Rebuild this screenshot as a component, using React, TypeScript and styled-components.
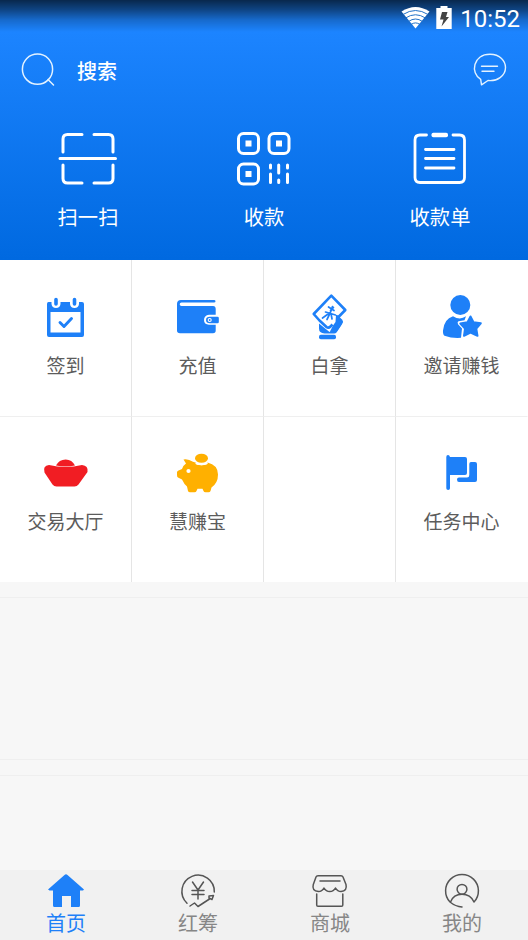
import React from "react";
import styled, { createGlobalStyle } from "styled-components";

const BLUE = "#1e80f8";

const GlobalStyle = createGlobalStyle`
  * { box-sizing: border-box; }
  body {
    margin: 0;
    background: #f7f7f7;
    font-family: "Noto Sans CJK SC", sans-serif;
  }
`;

const Screen = styled.div`
  width: 528px;
  height: 940px;
  display: flex;
  flex-direction: column;
  overflow: hidden;
  background: #f7f7f7;
`;

const Header = styled.header`
  height: 260px;
  flex: none;
  color: #fff;
  background:
    linear-gradient(180deg, rgba(0, 0, 0, 0.7) 0, rgba(0, 0, 0, 0.48) 10px, rgba(0, 0, 0, 0.2) 20px, rgba(0, 0, 0, 0) 32px),
    linear-gradient(180deg, #1c84ff 0, #1c84ff 32px, #0069e0 260px);
`;

const StatusBar = styled.div`
  height: 38px;
  display: flex;
  justify-content: flex-end;
  padding-right: 8px;
`;

const Clock = styled.time`
  font: 400 24px/38px Roboto, sans-serif;
  margin-left: 7px;
`;

const SearchBar = styled.div`
  height: 64px;
  display: flex;
  align-items: center;
  padding: 0 20px;
`;

const SearchText = styled.span`
  flex: 1;
  margin-left: 21px;
  padding-top: 2px;
  font-size: 20px;
  font-weight: 500;
  line-height: 30px;
`;

const Actions = styled.div`
  display: grid;
  grid-template-columns: repeat(3, 176px);
  padding-top: 25px;
`;

const Action = styled.div`
  display: flex;
  flex-direction: column;
  align-items: center;
  font-size: 20.3px;
  font-weight: 400;
  line-height: 30px;
  gap: 10px;
`;

const Services = styled.main`
  flex: none;
  display: grid;
  grid-template-columns: repeat(4, 132px);
  grid-template-rows: 156px 166px;
  background: #fff;
`;

const Service = styled.div<{ $lastColumn: boolean; $secondRow: boolean }>`
  display: flex;
  flex-direction: column;
  align-items: center;
  padding-top: ${(p) => (p.$secondRow ? 29 : 30)}px;
  border-right: 1px solid ${(p) => (p.$lastColumn ? "transparent" : "#e5e5e5")};
  border-top: ${(p) => (p.$secondRow ? "1px solid #efefef" : "0")};
  color: #5c5c5c;
  font-size: 19px;
  line-height: 28px;
  gap: 6px;
`;

const Divider = styled.div<{ $gap: number }>`
  flex: none;
  height: 1px;
  margin-top: ${(p) => p.$gap}px;
  background: #efefef;
`;

const TabBar = styled.nav`
  height: 70px;
  flex: none;
  margin-top: auto;
  display: grid;
  grid-template-columns: repeat(4, 132px);
  background: #f1f1f1;
`;

const Tab = styled.div<{ $active: boolean }>`
  display: flex;
  flex-direction: column;
  align-items: center;
  padding-top: 2px;
  color: ${(p) => (p.$active ? BLUE : "#868686")};
  font-size: 20px;
  line-height: 29px;
`;

const Glyph = styled.svg`
  display: block;
  flex: none;
  overflow: visible;
`;

const Stroked = styled.g<{ $width: number; $color?: string }>`
  fill: none;
  stroke: ${(p) => p.$color || "#fff"};
  stroke-width: ${(p) => p.$width};
  stroke-linecap: round;
  stroke-linejoin: round;
`;

type IconProps = { x: number; y: number; w: number; h: number; children?: React.ReactNode };

const Icon = ({ x, y, w, h, children }: IconProps) => (
  <Glyph width={w} height={h} viewBox={`${x} ${y} ${w} ${h}`}>
    {children}
  </Glyph>
);

const actions = [
  {
    label: "扫一扫",
    icon: (
      <Icon x={56} y={127} w={64} h={64}>
        <Stroked $width={3}>
          <path d="M63 152V139Q63 134.500 67.500 134.500H82M94 134.500H108.500Q113 134.500 113 139V152M63 165V178.500Q63 183 67.500 183H82M94 183H108.500Q113 183 113 178.500V165M60 158.500H115.500" />
        </Stroked>
      </Icon>
    ),
  },
  {
    label: "收款",
    icon: (
      <Icon x={232} y={127} w={64} h={64}>
        <Stroked $width={3}>
          <rect x="238.500" y="133.500" width="20" height="20" rx="5" />
          <rect x="269" y="133.500" width="20" height="20" rx="5" />
          <rect x="238.500" y="164" width="20" height="20" rx="5" />
          <path d="M270.500 165V168M270.500 174V182.500M278.700 165V173M278.700 180V182.500M287.500 165V168M287.500 174V182.500" />
        </Stroked>
        <path fill="#fff" d="M245.500 140.500h6v6h-6zM276 140.500h6v6h-6zM245.500 171h6v6h-6z" />
      </Icon>
    ),
  },
  {
    label: "收款单",
    icon: (
      <Icon x={408} y={127} w={64} h={64}>
        <Stroked $width={2.8}>
          <path d="M426.500 135H420Q415 135 415 140V177.500Q415 182.500 420 182.500H459.500Q464.500 182.500 464.500 177.500V140Q464.500 135 459.500 135H453M425.500 149.500H454M425.500 158.500H454M425.500 168H454" />
        </Stroked>
        <rect x="431.500" y="132.700" width="16.500" height="4.600" rx="1.800" fill="#fff" />
      </Icon>
    ),
  },
];

const services = [
  {
    label: "签到",
    icon: (
      <Icon x={38} y={290} w={55} h={55}>
        <path
          fill={BLUE}
          fillRule="evenodd"
          d="M48.500 302H51.500V304Q52 308 56 308Q60 308 60.500 304V302H70V304Q70.500 308 74.500 308Q78.500 308 79 304V302H82Q84 302 84 304V335Q84 337 82 337H49Q47 337 47 335V304Q47 302 48.500 302ZM50.500 312V332.500H80.500V312Z"
        />
        <Stroked $width={3.6} $color={BLUE}>
          <path d="M56 299.500V304M74.500 299.500V304" />
        </Stroked>
        <Stroked $width={2.9} $color={BLUE}>
          <path d="M60 322.500L64 326.500L71.500 318.500" />
        </Stroked>
      </Icon>
    ),
  },
  {
    label: "充值",
    icon: (
      <Icon x={170} y={290} w={55} h={55}>
        <path
          fill={BLUE}
          d="M181 300H214Q215.500 300 215.500 301.300Q215.500 302.500 214 302.500H181.500Q179.700 302.700 179.700 304.200Q179.700 306 181.500 306H213Q215.700 306 215.700 309V314.800H209Q204 315.500 204 320Q204 324.500 209 324.700H215.700V330.500Q215.700 333.300 213 333.300H180Q177 333.300 177 330.500V304Q177 300 181 300Z"
        />
        <path fill={BLUE} d="M210 316.700H217.500Q218.800 316.700 218.800 318V322Q218.800 323.300 217.500 323.300H210Q206 323.300 206 320Q206 316.700 210 316.700Z" />
        <circle cx="209.700" cy="320" r="1.500" fill={BLUE} stroke="#fff" strokeWidth="1.100" />
      </Icon>
    ),
  },
  {
    label: "白拿",
    icon: (
      <Icon x={302} y={290} w={55} h={55}>
        <path fill={BLUE} d="M319 323.500L329.500 332L338 324L343 320.500Q343.500 322 341.500 325L336.500 332.500Q335.500 333.800 333.500 333.500H324.500Q319 333 319 328.500Z" />
        <rect x="319" y="334.800" width="17" height="4.400" rx="1.800" fill={BLUE} />
        <path d="M331.300 296L345.300 310L328.800 327.500L313.700 314Z" fill="#fff" stroke="#fff" strokeWidth="4.600" strokeLinejoin="round" />
        <path d="M337 318.500L345.300 310L331.300 295.700L313.700 314L319.500 320.500L326.500 327Q328.500 328.500 330.500 326.500L332.500 324.500" fill="none" stroke={BLUE} strokeWidth="2.600" strokeLinejoin="round" />
        <path d="M336 315Q338.500 314.500 339.500 317L342.500 320Q343 323 340.500 326L336.500 332L330 331.500L333 325.500L335.500 322Z" fill={BLUE} />
        <Stroked $width={1.7} $color={BLUE}>
          <path d="M328.500 307L334 310.500M325.500 312L335.500 315M332.500 306.500Q331 312 327 319.500M329.500 313L322.500 318M331 313.500L332 319" />
          <path d="M333.500 307.500L330.500 310.500" />
        </Stroked>
      </Icon>
    ),
  },
  {
    label: "邀请赚钱",
    icon: (
      <Icon x={434} y={290} w={55} h={55}>
        <circle cx="460.300" cy="305" r="10" fill={BLUE} />
        <path fill={BLUE} d="M453 316.200Q460 320.500 466 316.300L464.500 320.300L458.500 321.300Q457 322 458 324.300L462 328.500L461 337.800Q452 338.500 444.500 335.700Q442.700 334.500 443 330.500Q444 319 453 316.200Z" />
        <path
          fill={BLUE}
          stroke={BLUE}
          strokeWidth="2"
          strokeLinejoin="round"
          d="M470.500 316.500L473.500 322.200L480.800 323.300L476.300 328.600L477.500 335.800L470.500 332.700L464 335.800L465 328.600L460.300 323.500L467.500 322.200Z"
        />
      </Icon>
    ),
  },
  {
    label: "交易大厅",
    icon: (
      <Icon x={38} y={446} w={55} h={55}>
        <path fill="#f11d23" d="M56 465.500Q59 459.500 65.700 459.500Q72 459.500 75 465.500Q65.500 467.500 56 465.500Z" />
        <path
          fill="#f11d23"
          d="M49 465Q65.500 469.200 82 465Q88.500 465.500 87.500 472L78.500 484.500Q77 486.400 74.500 486.400H56.500Q54 486.400 52.500 484.500L44.500 472.500Q42.500 465.500 49 465Z"
        />
      </Icon>
    ),
  },
  {
    label: "慧赚宝",
    icon: (
      <Icon x={170} y={446} w={55} h={55}>
        <ellipse cx="201.500" cy="458.200" rx="6.500" ry="4.500" fill="#ffb000" />
        <path
          fill="#ffb000"
          d="M183.500 459.500Q188 458.500 193 461.800L196 462.800Q195 465.300 201.500 465.300Q208 465.300 207.500 462.500Q218 465 218 474.500Q218 483 211.500 487.500L210.500 491Q210 492.200 208.500 492.200H205.500Q204 492.200 203.500 491L202.500 488.800H197.500L196.500 491Q196 492.200 194.500 492.200H190Q188.500 492.200 188 491L187 486.500Q184 484 182 479.500L178 477.500Q177 477 177 475V472.500Q177 471 178.500 470.500L182 469Q183 465.500 186 463.500Z"
        />
        <path d="M195.500 463.500Q201.500 465.500 207.500 463.500" fill="none" stroke="#fff" strokeWidth="1.300" />
        <circle cx="188.500" cy="471" r="2.100" fill="#fff" />
      </Icon>
    ),
  },
  { label: "" },
  {
    label: "任务中心",
    icon: (
      <Icon x={434} y={446} w={55} h={55}>
        <path
          fill={BLUE}
          d="M448 455Q449.500 455 450 457H465Q467 457 467 459V473Q467 475 465 475H450V488.300Q450 490 448.200 490Q446.300 490 446.300 488.300V457Q446.300 455 448 455Z"
        />
        <path fill={BLUE} d="M471 462H475Q477 462 477 464V480Q477 482 475 482H459Q457 482 457 479.500Q457 477.500 459 477.500H467Q469.300 477.500 469.300 475V464Q469.300 462 471 462Z" />
      </Icon>
    ),
  },
];

const tabs = [
  {
    label: "首页",
    icon: (
      <Icon x={46} y={872} w={40} h={36}>
        <path fill={BLUE} d="M64.500 875Q66 873.700 67.500 875L84 889.500L83 890.500H80V905.500Q80 907 78.500 907H71V896H62V907H54.500Q53 907 53 905.500V890.500H49.500L48 889.500Z" />
      </Icon>
    ),
  },
  {
    label: "红筹",
    icon: (
      <Icon x={178} y={872} w={40} h={36}>
        <Stroked $width={1.5} $color="#555">
          <path d="M187 903.200A16.200 16.200 0 1 1 214.300 892M190 906L194.500 903L198 906.500L209.500 899M209 896L213.500 895.500L212 899.500L209 898ZM192.500 882L198 890L203.500 882M192 890.500H204M192 894.500H204M198 890V899" />
        </Stroked>
      </Icon>
    ),
  },
  {
    label: "商城",
    icon: (
      <Icon x={310} y={872} w={40} h={36}>
        <Stroked $width={1.5} $color="#555">
          <path d="M318 875.700H341Q342.500 875.700 343 877L346 884.500Q347.500 891 341 891.500Q337.500 891.500 335.500 888Q333.500 891.500 329.800 891.500Q326 891.500 324 888Q322 891.500 318.500 891.500Q311.500 891 313.300 884.500L316 877Q316.500 875.700 318 875.700ZM320 881H340M316.700 894V905Q316.700 906.300 318 906.300H341.500Q342.800 906.300 342.800 905V894" />
        </Stroked>
      </Icon>
    ),
  },
  {
    label: "我的",
    icon: (
      <Icon x={442} y={872} w={40} h={36}>
        <Stroked $width={1.5} $color="#555">
          <circle cx="462" cy="889.300" r="4.900" />
          <path d="M462 907Q455.500 906.500 450 902A16.400 16.400 0 1 1 474 902Q470.500 894.300 462 894.300Q453.500 894.300 450.500 902" />
        </Stroked>
      </Icon>
    ),
  },
];

export default function App() {
  return (
    <>
      <GlobalStyle />
      <Screen>
        <Header>
          <StatusBar>
            <Icon x={400} y={0} w={53} h={38}>
              <path d="M401.500 11.500Q415.500 2.500 429.500 11.500L415.500 28.500Z" fill="#fff" />
              <g fill="none" stroke="#2272c8" strokeWidth="1">
                <path d="M403 14.500Q415.500 6.500 428 14.500M405.500 18Q415.500 11.500 425.500 18M408.500 21.500Q415.500 16.500 422.500 21.500M411 24.500Q415.500 21.300 420 24.500" />
              </g>
              <path fill="#fff" d="M440.500 6H447.500V8H451.700V29H436.300V8H440.500Z" />
              <path fill="#444" d="M442 12H447.500L446 17H449L441.500 26.500L443.500 19.500H440Z" />
            </Icon>
            <Clock>10:52</Clock>
          </StatusBar>
          <SearchBar>
            <Icon x={20} y={50} w={36} h={40}>
              <Stroked $width={1.5} $color="#e3f2ff">
                <circle cx="37.500" cy="69.200" r="15.100" />
                <path d="M48 79.500L53.500 85" />
              </Stroked>
            </Icon>
            <SearchText>搜索</SearchText>
            <Icon x={472} y={50} w={36} h={40}>
              <Stroked $width={1.4} $color="#e3f2ff">
                <path d="M480.700 79.300C470 73 473 54.300 490 54.300C500 54.300 505.500 61 505.500 67.500C505.500 76 497 81.500 488 80.500L481.500 84.800Z" />
                <path d="M481.500 66.200H497.500M482 71.200H494" />
              </Stroked>
            </Icon>
          </SearchBar>
          <Actions>
            {actions.map((a) => (
              <Action key={a.label}>
                {a.icon}
                <span>{a.label}</span>
              </Action>
            ))}
          </Actions>
        </Header>
        <Services>
          {services.map((s, i) => (
            <Service key={i} $lastColumn={i % 4 === 3} $secondRow={i > 3}>
              {s.icon}
              <span>{s.label}</span>
            </Service>
          ))}
        </Services>
        <Divider $gap={15} />
        <Divider $gap={161} />
        <Divider $gap={15} />
        <TabBar>
          {tabs.map((t, i) => (
            <Tab key={t.label} $active={i === 0}>
              {t.icon}
              <span>{t.label}</span>
            </Tab>
          ))}
        </TabBar>
      </Screen>
    </>
  );
}
